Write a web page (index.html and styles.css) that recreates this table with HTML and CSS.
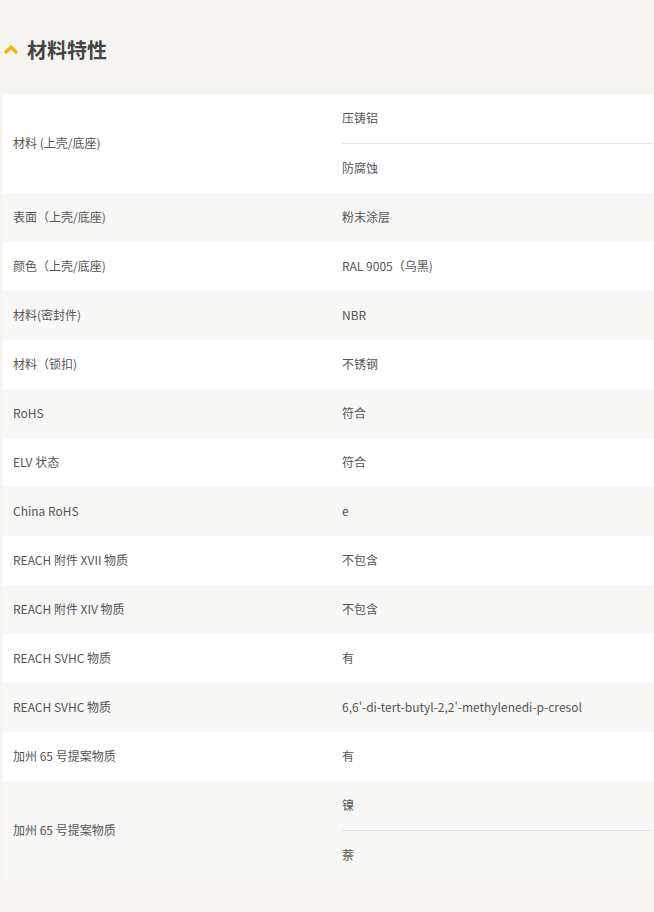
FILE: index.html
```html
<!DOCTYPE html>
<html lang="zh">
<head>
<meta charset="utf-8">
<link rel="stylesheet" href="styles.css">
</head>
<body>
<section class="panel">
  <h2 class="title">
    <svg class="chev" width="14" height="10" viewBox="0 0 14 10"><path d="M2 8 L7 3 L12 8" fill="none" stroke="#f5b60a" stroke-width="3.2" stroke-linecap="square"/></svg>
    <span>材料特性</span>
  </h2>
  <div class="table">
    <div class="row">
      <div class="key">材料 (上壳/底座)</div>
      <div class="val multi"><div class="sub">压铸铝</div><div class="sub">防腐蚀</div></div>
    </div>
    <div class="row"><div class="key">表面（上壳/底座)</div><div class="val">粉末涂层</div></div>
    <div class="row"><div class="key">颜色（上壳/底座)</div><div class="val">RAL 9005（乌黑)</div></div>
    <div class="row"><div class="key">材料(密封件)</div><div class="val">NBR</div></div>
    <div class="row"><div class="key">材料（锁扣)</div><div class="val">不锈钢</div></div>
    <div class="row"><div class="key">RoHS</div><div class="val">符合</div></div>
    <div class="row"><div class="key">ELV 状态</div><div class="val">符合</div></div>
    <div class="row"><div class="key">China RoHS</div><div class="val">e</div></div>
    <div class="row"><div class="key">REACH 附件 XVII 物质</div><div class="val">不包含</div></div>
    <div class="row"><div class="key">REACH 附件 XIV 物质</div><div class="val">不包含</div></div>
    <div class="row"><div class="key">REACH SVHC 物质</div><div class="val">有</div></div>
    <div class="row"><div class="key">REACH SVHC 物质</div><div class="val">6,6'-di-tert-butyl-2,2'-methylenedi-p-cresol</div></div>
    <div class="row"><div class="key">加州 65 号提案物质</div><div class="val">有</div></div>
    <div class="row">
      <div class="key">加州 65 号提案物质</div>
      <div class="val multi"><div class="sub">镍</div><div class="sub">萘</div></div>
    </div>
  </div>
</section>
</body>
</html>
```
FILE: styles.css
```css
html, body {
  margin: 0;
  padding: 0;
  background: #f5f4f1;
}
body {
  font-family: "Noto Sans CJK SC", "Noto Sans", sans-serif;
  font-size: 12px;
  color: #555;
}
.panel {
  padding: 0 0 32px 3px;
}
.title {
  display: flex;
  align-items: center;
  gap: 9px;
  height: 94px;
  margin: 0 0 0 -1px;
  padding: 4px 0 0 2px;
  font-size: 20px;
  font-weight: bold;
  color: #444;
  box-sizing: border-box;
}
.chev {
  display: block;
}
.table {
  display: flex;
  flex-direction: column;
}
.row {
  display: grid;
  grid-template-columns: 329px 1fr;
  background: #fff;
}
.row:nth-child(even) {
  background: #f7f7f5;
}
.key {
  display: flex;
  align-items: center;
  padding: 0 0 2px 10px;
  min-height: 49px;
  box-sizing: border-box;
}
.val {
  display: flex;
  align-items: center;
  padding: 0 2px 2px 10px;
  min-height: 49px;
  box-sizing: border-box;
}
.val.multi {
  flex-direction: column;
  align-items: stretch;
  padding-bottom: 0;
}
.sub {
  display: flex;
  align-items: center;
  height: 49px;
  padding-bottom: 2px;
  box-sizing: border-box;
}
.sub + .sub {
  height: 50px;
  border-top: 1px solid #e3e3e3;
}
```
